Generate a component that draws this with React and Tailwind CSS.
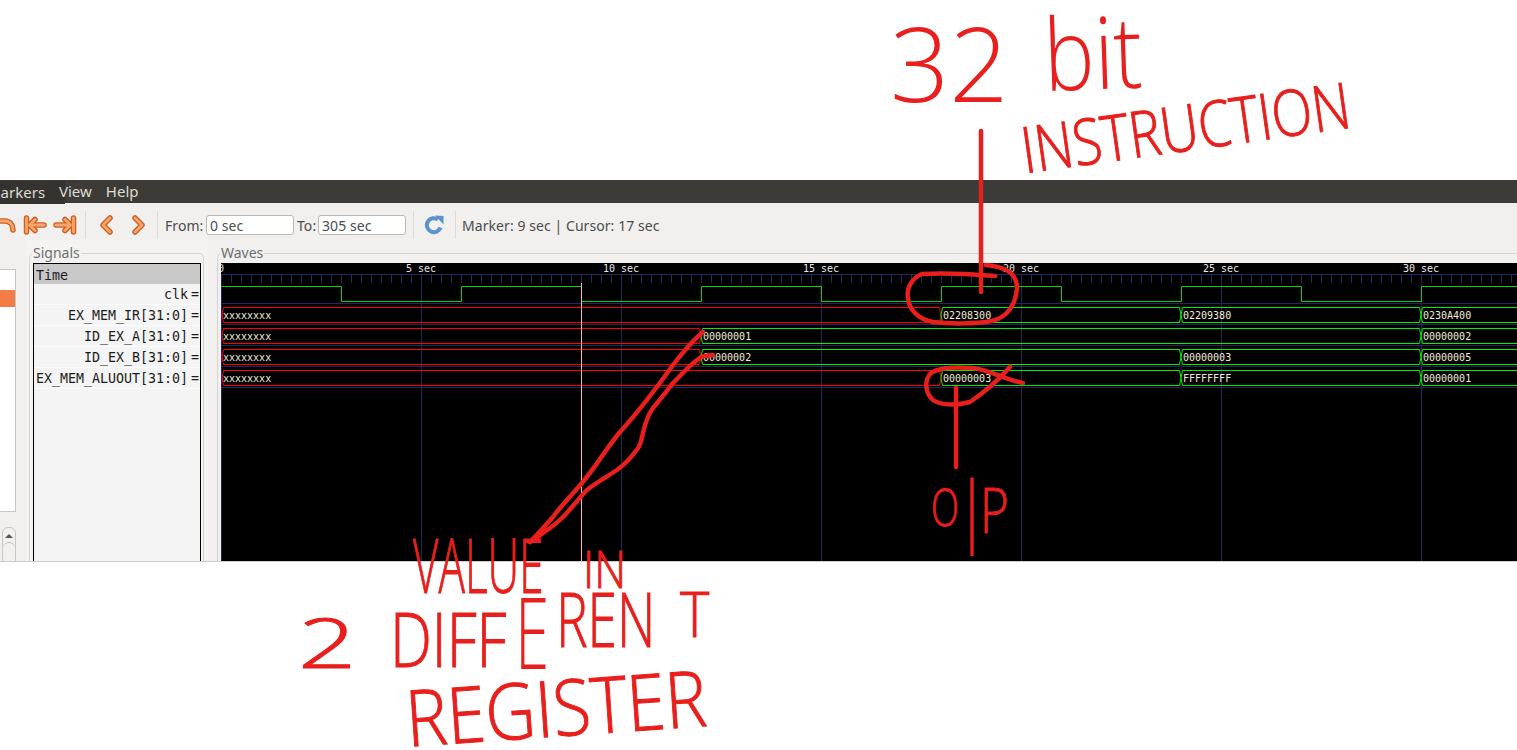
import React from 'react';

const majors = [0, 200, 400, 600, 800, 1000, 1200];
const clockXs = [120, 240, 360, 480, 600, 720, 840, 960, 1080, 1200];
const grid = '#25255f';

// x values are relative to the left edge of the wave view
const buses = [
  { top: 44, segs: [[1, 720, 'xxxxxxxx', 'r'], [720, 960, '02208300', 'g'], [960, 1200, '02209380', 'g'], [1200, 1320, '0230A400', 'g']] },
  { top: 65, segs: [[1, 480, 'xxxxxxxx', 'r'], [480, 1200, '00000001', 'g'], [1200, 1320, '00000002', 'g']] },
  { top: 86, segs: [[1, 480, 'xxxxxxxx', 'r'], [480, 960, '00000002', 'g'], [960, 1200, '00000003', 'g'], [1200, 1320, '00000005', 'g']] },
  { top: 107, segs: [[1, 720, 'xxxxxxxx', 'r'], [720, 960, '00000003', 'g'], [960, 1200, 'FFFFFFFF', 'g'], [1200, 1320, '00000001', 'g']] },
];

const signals = ['clk', 'EX_MEM_IR[31:0]', 'ID_EX_A[31:0]', 'ID_EX_B[31:0]', 'EX_MEM_ALUOUT[31:0]'];

const OrangeIcon = ({ d, w, h, className }) => (
  <svg viewBox={`0 0 ${w} ${h}`} width={w} height={h} fill="none" className={`overflow-visible shrink-0 ${className}`}>
    <path d={d} stroke="#cf5f24" strokeWidth="5.5" strokeLinecap="round" strokeLinejoin="round" />
    <path d={d} stroke="#f7a56a" strokeWidth="2.8" strokeLinecap="round" strokeLinejoin="round" />
  </svg>
);

const Sep = ({ className }) => <div className={`h-[28px] w-px bg-[#dcdad6] ${className}`} />;

const Waves = () => {
  let clock = 'M0.5 23.5';
  clockXs.forEach((x, i) => {
    clock += `H${x + 0.5}V${i % 2 === 0 ? 38.5 : 23.5}`;
  });
  clock += 'H1296';

  const ticks = [];
  for (let x = 0; x < 1300; x += 10) ticks.push(x);

  return (
    <svg width="1296" height="298" className="block bg-black">
      {/* ruler */}
      <path d="M0 11.5H1296" stroke={grid} />
      {ticks.map((x) => (
        <path key={x} d={`M${x + 0.5} 11V20`} stroke={grid} />
      ))}
      {majors.map((x) => (
        <path key={x} d={`M${x + 0.5} 11V298`} stroke={grid} />
      ))}
      {[40, 61, 82, 103, 124].map((y) => (
        <path key={y} d={`M0 ${y + 0.5}H1296`} stroke={grid} />
      ))}
      {majors.map((x, i) => (
        <text key={x} x={x} y="9" textAnchor="middle" fill="#e8e8e8" fontSize="10" fontFamily="'DejaVu Sans Mono', monospace">
          {i === 0 ? '0' : `${i * 5} sec`}
        </text>
      ))}

      {/* clk */}
      <path d={clock} fill="none" stroke="#00d800" />

      {/* buses */}
      {buses.map((bus) =>
        bus.segs.map(([a, b, label, c]) => {
          const t = bus.top + 0.5;
          const m = bus.top + 8;
          const bot = bus.top + 15.5;
          const color = c === 'r' ? '#ff0000' : '#00f000';
          return (
            <g key={`${bus.top}-${a}`}>
              <path d={`M${a} ${m}L${a + 1.5} ${t}H${b - 1.5}L${b} ${m}L${b - 1.5} ${bot}H${a + 1.5}Z`} fill="none" stroke={color} />
              <text x={c === 'r' ? 2 : a + 2} y={bus.top + 12} fill="#f0efdc" fontSize="10" fontFamily="'DejaVu Sans Mono', monospace">{label}</text>
            </g>
          );
        })
      )}

      {/* marker */}
      <path d="M360.5 20V298" stroke="#ffb4b4" />
    </svg>
  );
};

const App = () => {
  return (
    <div className="relative w-[1517px] h-[750px] overflow-hidden bg-white font-['Noto_Sans',sans-serif]">
      <div className="h-[180px]" />

      {/* app window */}
      <div className="h-[382px] bg-[#f1f0ee] border-b border-[#cfcdc9] overflow-hidden">
        <div className="h-[23px] bg-[#3c3b37] flex items-center text-[15px] text-[#dfdbd2]">
          <div className="w-[78px] -ml-[13px] h-[23px] mt-[2px] bg-[#35332f] flex items-center">Markers</div>
          <div className="-ml-[6px] z-10">
            <span>View</span>
            <span className="ml-[14px]">Help</span>
          </div>
        </div>

        {/* toolbar */}
        <div className="h-[37px] pt-[7px] flex items-center text-[14px] tracking-[0.07px] text-[#4c4c4c]">
          <OrangeIcon d="M-5 5H5C10 5 13 9 13 14" w={16} h={18} />
          <OrangeIcon d="M2.5 2V16M20 9H6M11 3.5L5.5 9L11 14.5" w={22} h={18} className="ml-[8px]" />
          <OrangeIcon d="M19.5 2V16M2 9H16M11 3.5L16.5 9L11 14.5" w={22} h={18} className="ml-[8px]" />
          <Sep className="ml-[9px]" />
          <OrangeIcon d="M10 3L3 10L10 17" w={13} h={20} className="ml-[14px]" />
          <OrangeIcon d="M3 3L10 10L3 17" w={13} h={20} className="ml-[19px]" />
          <Sep className="ml-[12px]" />
          <span className="ml-[7px] w-[41px]">From:</span>
          <div className="w-[88px] h-[20px] bg-white border border-[#b9b7b3] rounded-[3px] pl-[3px] leading-[19px]">0 sec</div>
          <span className="ml-[3px] w-[21px]">To:</span>
          <div className="w-[88px] h-[20px] bg-white border border-[#b9b7b3] rounded-[3px] pl-[3px] leading-[19px]">305 sec</div>
          <Sep className="ml-[7px]" />
          <svg viewBox="0 0 20 20" className="ml-[10px] w-[20px] h-[20px]" fill="none">
            <path d="M16.5 12.5A7 7 0 1 1 14 4.5" stroke="#5b93cc" strokeWidth="4" />
            <path d="M11 0.5L19.5 1V9.5Z" fill="#5b93cc" />
          </svg>
          <Sep className="ml-[11px]" />
          <span className="ml-[6px] whitespace-nowrap">Marker: 9 sec | Cursor: 17 sec</span>
        </div>

        {/* panes */}
        <div className="flex h-[321px]">
          <div className="w-[26px] shrink-0 pt-[29px] pr-[10px]">
            <div className="h-[243px] bg-white border border-[#c8c6c2] border-l-0 pt-[20px]">
              <div className="h-[17px] w-[15px] bg-[#f47c45]" />
            </div>
            <div className="mt-[15px] ml-[2px] h-[40px] border border-[#c8c6c2] rounded-t-[6px] bg-[#f1f0ee] flex flex-col items-center pt-[6px]">
              <div className="w-0 h-0 border-x-[4px] border-x-transparent border-b-[4px] border-b-[#555]" />
              <div className="mt-[4px] w-full flex-1 border-t border-[#bdbbb7] rounded-t-[6px]" />
            </div>
          </div>

          <div className="w-[182px] shrink-0 bg-[#f4f3f1] pt-[13px] pl-[3px] pr-[4px]">
            <div className="relative h-full border border-b-0 border-[#d6d4d0] rounded-t-[5px] pl-[3px] pr-[2px] pt-[9px]">
              <span className="absolute -top-[10px] left-[2px] px-[1px] bg-[#f4f3f1] text-[14px] leading-[18px] text-[#6e6e6e]">Signals</span>
              <div className="h-full border border-b-0 border-black bg-[#f4f4f4] font-['DejaVu_Sans_Mono',monospace] text-[13.3px] text-[#1c1c1c] overflow-hidden">
                <div className="h-[20px] bg-[#c8c8c8] px-[2px] leading-[23px]">Time</div>
                {signals.map((name) => (
                  <div key={name} className="h-[21px] border-b border-[#fbfbfb] flex justify-end leading-[21px] whitespace-nowrap">
                    {name}
                    <span className="ml-[3px] w-[9px]">=</span>
                  </div>
                ))}
              </div>
            </div>
          </div>

          <div className="flex-1 min-w-0 pl-[9px] pt-[13px]">
            <div className="relative h-full border border-r-0 border-b-0 border-[#d6d4d0] rounded-tl-[5px] pl-[3px] pt-[9px]">
              <span className="absolute -top-[10px] left-[2px] px-[1px] bg-[#f1f0ee] text-[14px] leading-[18px] text-[#6e6e6e]">Waves</span>
              <div className="overflow-hidden h-full">
                <Waves />
              </div>
            </div>
          </div>
        </div>
      </div>

      {/* red pen strokes */}
      <svg className="absolute inset-0 pointer-events-none" width="1517" height="750" fill="none" stroke="#e81f1c" strokeWidth="4.5" strokeLinecap="round" strokeLinejoin="round">
        <path d="M981 131V292" />
        <path d="M995 276C970 274 940 273 922 274C912 278 906 288 908 298C909 310 918 319 933 322C950 324 975 324 992 321C1008 317 1016 304 1017 288C1017 276 1010 267 986 265" />
        <path d="M1010 367C1000 378 985 392 970 402C955 406 940 405 933 400C925 393 924 380 931 373C940 367 960 367 973 368C990 370 1005 380 1023 383" />
        <path d="M956 388V467" />
        <path d="M703 332C693 340 683 352 673 365C655 390 640 410 620 432C605 450 595 468 582 483C570 497 560 507 553 517C545 526 537 535 530 542" />
        <path d="M713 355C705 356 703 355 697 360C688 367 681 375 673 383C666 392 660 400 653 408C646 418 645 425 643 433C641 442 640 447 635 452C630 459 625 464 617 470C605 478 597 482 587 490C578 499 572 508 563 517C555 525 549 529 543 533C538 537 534 540 530 542" />
      </svg>

      {/* handwritten notes */}
      <div className="absolute inset-0 pointer-events-none font-['Open_Sans',sans-serif] font-light text-[#e81f1c] leading-none whitespace-nowrap">
        <span className="absolute left-[890px] top-[10px] text-[104px] origin-top-left">32</span>
        <span className="absolute left-[1042px] top-[2px] text-[100px] origin-top-left scale-x-[0.85] -rotate-[2deg]">bit</span>
        <span className="absolute left-[1017px] top-[118px] text-[64px] origin-top-left scale-x-[0.83] -rotate-[8deg] [-webkit-text-stroke:1px_#e81f1c]">INSTRUCTION</span>
        <span className="absolute left-[931px] top-[480px] text-[52px] origin-top-left scale-x-[0.7] [-webkit-text-stroke:1px_#e81f1c]">O</span>
        <span className="absolute left-[951px] top-[468px] text-[78px]">|</span>
        <span className="absolute left-[980px] top-[478px] text-[62px] origin-top-left scale-x-[0.8] [-webkit-text-stroke:1px_#e81f1c]">P</span>
        <span className="absolute left-[413px] top-[526px] text-[76px] origin-top-left scale-x-[0.58] [-webkit-text-stroke:1px_#e81f1c]">VALUE</span>
        <span className="absolute left-[583px] top-[542px] text-[52px] origin-top-left scale-x-[0.85] [-webkit-text-stroke:1px_#e81f1c]">IN</span>
        <span className="absolute left-[298px] top-[608px] text-[68px] origin-top-left scale-x-[1.5] [-webkit-text-stroke:1px_#e81f1c]">2</span>
        <span className="absolute left-[390px] top-[600px] text-[76px] origin-top-left scale-x-[0.78] [-webkit-text-stroke:1px_#e81f1c]">DIFF</span>
        <span className="absolute left-[515px] top-[580px] text-[100px] origin-top-left scale-x-[0.62]">E</span>
        <span className="absolute left-[556px] top-[580px] text-[76px] origin-top-left scale-x-[0.7] [-webkit-text-stroke:1px_#e81f1c]">REN</span>
        <span className="absolute left-[680px] top-[582px] text-[62px] origin-top-left scale-x-[0.9] [-webkit-text-stroke:1px_#e81f1c]">T</span>
        <span className="absolute left-[403px] top-[678px] text-[78px] origin-top-left scale-x-[0.89] -rotate-[4deg] [-webkit-text-stroke:1px_#e81f1c]">REGISTER</span>
      </div>
    </div>
  );
};

export default App;
